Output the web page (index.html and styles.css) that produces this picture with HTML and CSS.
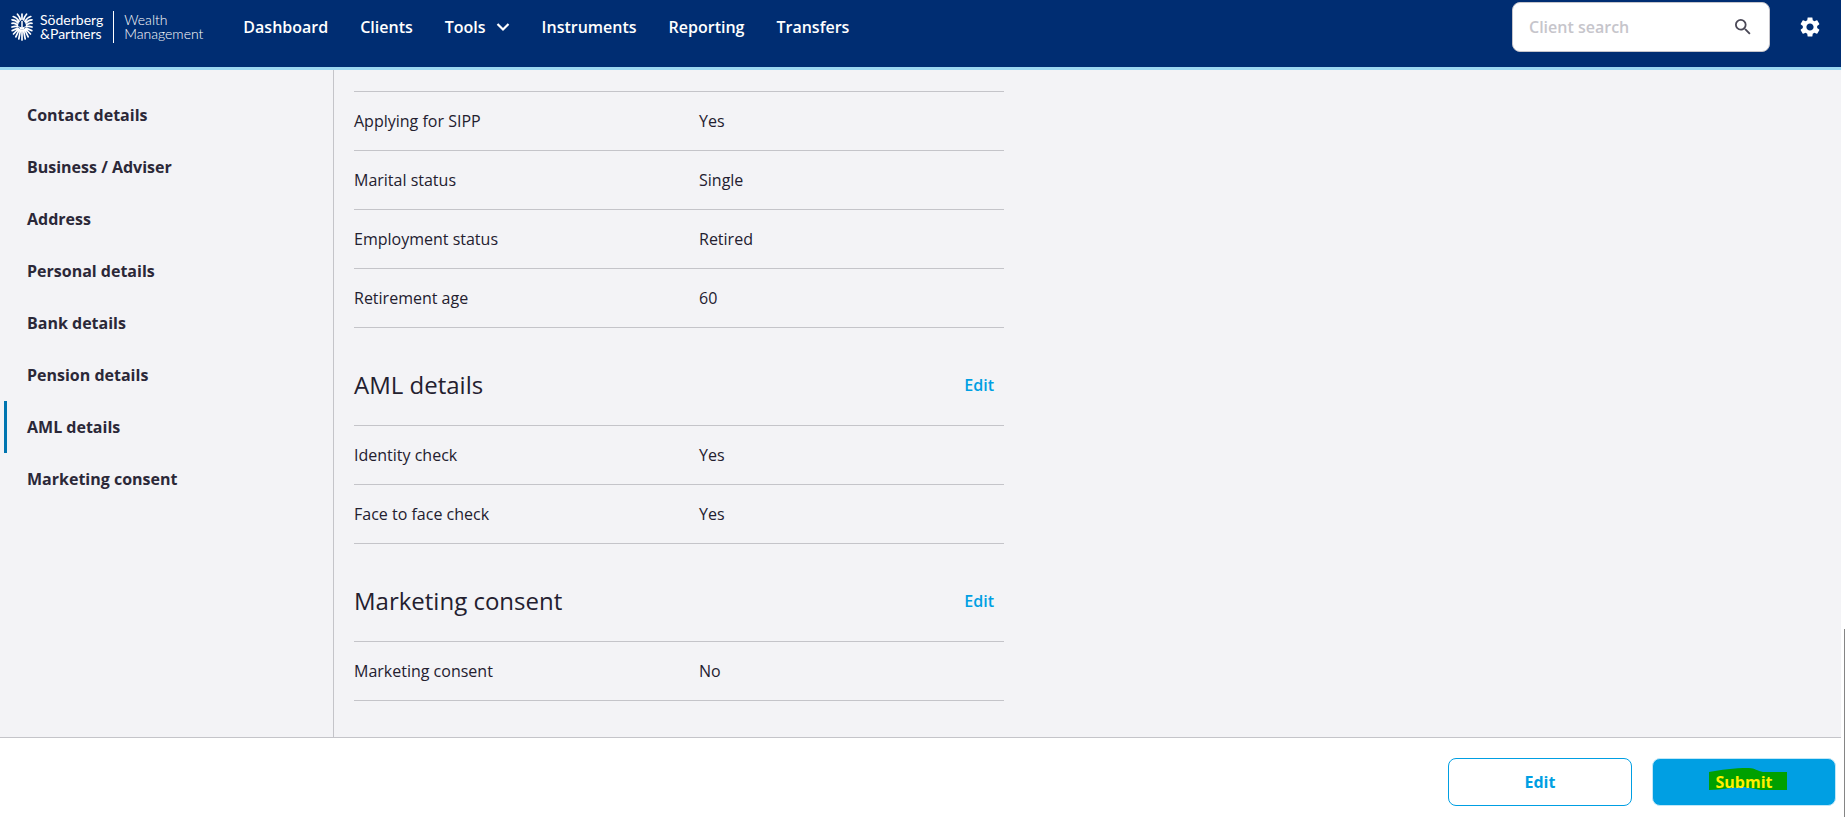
FILE: index.html
```
<!DOCTYPE html>
<html lang="en">
<head>
  <meta charset="utf-8">
  <title>Client summary - Wealth Management</title>
  <link rel="stylesheet" href="styles.css">
</head>
<body>
  <div class="page">
    <header class="topbar">
      <a class="logo" href="#">
        <svg class="shield" viewBox="0 0 22 28" aria-hidden="true">
          <g stroke="#fff" stroke-width="1.700" stroke-linecap="round" fill="none">
            <path d="M11 6V1M9.500 7Q9 4 6.500 1.200M12.500 7Q13 4 15.500 1.200M8 8.500Q6 4.500 2.200 3.500M14 8.500Q16 4.500 19.800 3.500M7 10Q5 7 1 6.800M15 10Q17 7 21 6.800M6.500 12Q4 9.800 1 10.300M15.500 12Q18 9.800 21 10.300M7 13.800Q4 12.800 1 14M15 13.800Q18 12.800 21 14"/>
            <path d="M11 17V27M9.500 17L7.800 26M12.500 17L14.200 26M8.300 16.500L4.800 23.800M13.700 16.500L17.200 23.800M7.500 15.800L2.500 21M14.500 15.800L19.500 21M6.500 15.300L1.200 17.600M15.500 15.300L20.800 17.600"/>
          </g>
          <path d="M8 13.500L11 14.500L14 13.500L13 16.500H9Z" fill="#fff"/>
          <path d="M11 8V15" stroke="#fff" stroke-width="1.500"/>
        </svg>
        <span class="logo-name">Söderberg<br>&amp;Partners</span>
        <span class="logo-unit">Wealth<br>Management</span>
      </a>
      <nav class="main-nav">
        <a href="#">Dashboard</a>
        <a href="#">Clients</a>
        <a href="#">Tools
          <svg class="chevron" viewBox="0 0 14 10" aria-hidden="true"><path d="M1.500 2L7 7.500L12.500 2" fill="none" stroke="#fff" stroke-width="2.200"/></svg>
        </a>
        <a href="#">Instruments</a>
        <a href="#">Reporting</a>
        <a href="#">Transfers</a>
      </nav>
      <form class="search">
        <input type="text" placeholder="Client search" aria-label="Client search">
        <button type="button" aria-label="Search">
          <svg viewBox="3 3 18 18" aria-hidden="true"><path fill="#4a4856" d="M15.500 14h-.79l-.28-.27A6.471 6.471 0 0 0 16 9.500 6.500 6.500 0 1 0 9.500 16c1.610 0 3.090-.59 4.230-1.570l.27.28v.79l5 4.990L20.490 19l-4.990-5zm-6 0C7.010 14 5 11.990 5 9.500S7.010 5 9.500 5 14 7.010 14 9.500 11.990 14 9.500 14z"/></svg>
        </button>
      </form>
      <button class="settings" type="button" aria-label="Settings">
        <svg viewBox="2 2 20 20" aria-hidden="true"><path fill="#fff" d="M19.140 12.940c.04-.3.060-.61.060-.94 0-.32-.02-.64-.07-.94l2.030-1.580c.18-.14.23-.41.120-.61l-1.920-3.320c-.12-.22-.37-.29-.59-.22l-2.390.96c-.5-.38-1.030-.7-1.620-.94l-.36-2.540c-.04-.24-.24-.41-.48-.41h-3.840c-.24 0-.43.17-.47.410l-.36 2.540c-.59.24-1.130.57-1.620.940l-2.390-.96c-.22-.08-.47 0-.59.220L2.740 8.870c-.12.210-.08.470.120.610l2.030 1.580c-.05.300-.09.630-.09.940s.02.640.070.940l-2.030 1.580c-.18.140-.23.410-.12.610l1.920 3.320c.12.220.37.290.59.220l2.390-.96c.5.380 1.030.7 1.620.940l.36 2.540c.05.240.240.410.480.410h3.840c.24 0 .44-.17.470-.41l.36-2.540c.59-.24 1.130-.56 1.620-.94l2.390.96c.22.080.470 0 .59-.22l1.920-3.320c.12-.22.070-.47-.12-.61l-2.010-1.580zM12 15.600c-1.980 0-3.600-1.620-3.600-3.600s1.620-3.600 3.600-3.600 3.600 1.620 3.600 3.600-1.620 3.600-3.600 3.600z"/></svg>
      </button>
    </header>

    <div class="body">
      <nav class="sidebar">
        <a href="#">Contact details</a>
        <a href="#">Business / Adviser</a>
        <a href="#">Address</a>
        <a href="#">Personal details</a>
        <a href="#">Bank details</a>
        <a href="#">Pension details</a>
        <a class="active" href="#aml">AML details</a>
        <a href="#marketing">Marketing consent</a>
      </nav>

      <main class="content">
        <table class="details">
          <tr><th scope="row">Applying for SIPP</th><td>Yes</td></tr>
          <tr><th scope="row">Marital status</th><td>Single</td></tr>
          <tr><th scope="row">Employment status</th><td>Retired</td></tr>
          <tr><th scope="row">Retirement age</th><td>60</td></tr>
        </table>

        <div class="section-head" id="aml">
          <h2>AML details</h2>
          <a href="#">Edit</a>
        </div>
        <table class="details">
          <tr><th scope="row">Identity check</th><td>Yes</td></tr>
          <tr><th scope="row">Face to face check</th><td>Yes</td></tr>
        </table>

        <div class="section-head" id="marketing">
          <h2>Marketing consent</h2>
          <a href="#">Edit</a>
        </div>
        <table class="details">
          <tr><th scope="row">Marketing consent</th><td>No</td></tr>
        </table>
      </main>
    </div>

    <footer class="actions">
      <button class="btn" type="button">Edit</button>
      <button class="btn btn-primary" type="button">
        <svg class="marker" viewBox="0 0 78 22" aria-hidden="true"><path d="M0 4C12 2 24 0 40 0C46 0 48 3 54 4H78V22H52C44 21 40 19 34 19C22 19 14 22 0 22Z" fill="#00a000"/></svg>
        <span>Submit</span>
      </button>
    </footer>
  </div>
  <div class="scroll-track"><div class="scroll-thumb"></div></div>
</body>
</html>
```
FILE: styles.css
```
* {
  box-sizing: border-box;
}

body {
  margin: 0;
  height: 100vh;
  display: flex;
  background: #fff;
  color: #23202f;
  font-family: "Open Sans", sans-serif;
  font-size: 16px;
  line-height: 24px;
}

a {
  text-decoration: none;
}

button, input {
  font: inherit;
}

svg {
  display: block;
}

.page {
  flex: 1;
  display: flex;
  flex-direction: column;
}

/* header */
.topbar {
  display: flex;
  align-items: center;
  padding: 2px 21px 15px 11px;
  background: #002d72;
  border-bottom: 3px solid #9bd7f0;
}

.logo {
  display: flex;
  align-items: center;
  color: #fff;
  font-family: Lato, sans-serif;
  font-size: 14px;
  line-height: 14px;
}

.shield {
  width: 22px;
  height: 28px;
  margin-right: 7px;
}

.logo-name {
  padding: 2px 10px 2px 0;
  border-right: 1px solid #fff;
}

.logo-unit {
  padding-left: 10px;
  font-weight: 300;
}

.main-nav {
  display: flex;
  gap: 32px;
  margin-left: 40px;
}

.main-nav a {
  display: flex;
  align-items: center;
  gap: 10px;
  color: #fff;
  font-weight: 600;
}

.chevron {
  width: 14px;
  height: 10px;
}

.search {
  display: flex;
  align-items: center;
  width: 258px;
  height: 50px;
  margin-left: auto;
  padding: 0 18px 0 16px;
  background: #fff;
  border: 1px solid #c6c5cb;
  border-radius: 8px;
}

.search input {
  flex: 1;
  min-width: 0;
  padding: 0;
  border: 0;
  outline: 0;
  background: none;
}

.search input::placeholder {
  color: #c6c5cb;
  font-weight: 600;
  opacity: 1;
}

.search button, .settings {
  padding: 0;
  border: 0;
  background: none;
  cursor: pointer;
}

.search svg {
  width: 16px;
  height: 16px;
}

.settings {
  margin-left: 30px;
}

.settings svg {
  width: 20px;
  height: 20px;
}

/* middle part */
.body {
  flex: 1;
  display: flex;
  background: #f3f3f6;
}

.sidebar {
  width: 334px;
  padding: 19px 0 0 4px;
  border-right: 1px solid #c4c4c9;
}

.sidebar a {
  display: block;
  padding: 14px 20px;
  border-left: 3px solid transparent;
  color: #2b2838;
  font-weight: 700;
}

.sidebar a.active {
  border-left-color: #0075b0;
}

.content {
  width: 690px;
  padding: 21px 20px 0;
}

.details {
  width: 100%;
  table-layout: fixed;
  border-collapse: collapse;
}

.details th, .details td {
  height: 59px;
  padding: 0;
  border-top: 1px solid #c4c4c9;
  border-bottom: 1px solid #c4c4c9;
  text-align: left;
  font-weight: 400;
}

.details th {
  width: 345px;
}

.section-head {
  display: flex;
  align-items: center;
  justify-content: space-between;
  height: 97px;
  padding: 16px 10px 0 0;
}

.section-head h2 {
  margin: 0;
  font-size: 24px;
  font-weight: 400;
  line-height: 32px;
}

.section-head a {
  color: #009fe3;
  font-weight: 600;
}

/* bottom bar */
.actions {
  display: flex;
  justify-content: flex-end;
  gap: 20px;
  padding: 20px 5px 11px;
  background: #fff;
  border-top: 1px solid #c4c4c9;
}

.btn {
  position: relative;
  width: 184px;
  height: 48px;
  border: 1px solid #009fe3;
  border-radius: 8px;
  background: #fff;
  color: #009fe3;
  font-weight: 700;
  cursor: pointer;
}

.btn-primary {
  border-color: #bfe7f8;
  background: #009fe3;
  color: #ffef00;
}

.btn-primary span {
  position: relative;
}

/* highlighter stroke behind the label */
.marker {
  position: absolute;
  top: 9px;
  left: 56px;
  width: 78px;
  height: 22px;
}

.scroll-track {
  width: 4px;
  display: flex;
  align-items: flex-end;
  justify-content: flex-end;
}

.scroll-thumb {
  width: 1px;
  height: 23%;
  background: #858585;
}
```
